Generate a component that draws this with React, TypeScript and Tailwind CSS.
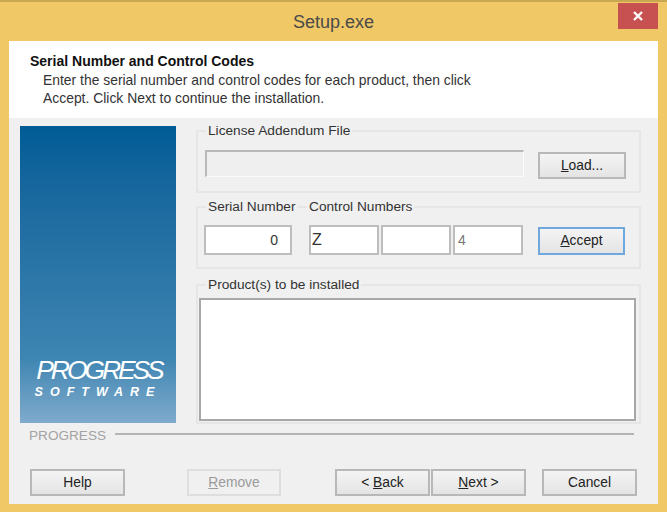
const FONT = "font-['Liberation_Sans',Arial,sans-serif]";

const fieldClass = "h-[30px] border-2 border-[#bdbdbd] bg-white text-[14px] text-[#333]";

const Button = ({ children, className = "" }: { children: React.ReactNode; className?: string }) => (
  <div className={`flex items-center justify-center border-2 bg-gradient-to-b pt-[2px] text-[13.8px] ${className}`}>{children}</div>
);

const normal = "h-[27px] border-[#b8b8b8] from-[#f4f4f4] to-[#e4e4e4] text-[#222]";

const Group = ({ className, children }: { className: string; children: React.ReactNode }) => (
  <div className={`relative w-[445px] border-2 border-[#e6e6e6] ${className}`}>{children}</div>
);

const GroupLabel = ({ className, children }: { className: string; children: React.ReactNode }) => (
  <span className={`absolute top-[-10px] bg-[#f0f0f0] px-[2px] text-[13.7px] leading-[18px] text-[#333] whitespace-nowrap ${className}`}>
    {children}
  </span>
);

const App = () => {
  return (
    <div className={`relative flex h-[512px] w-[667px] flex-col bg-[#f0c866] border-t-2 border-[#c8a850] ${FONT}`}>
      {/* Title bar */}
      <div className="flex h-[39px] shrink-0 items-center justify-center pt-[2px] text-[18px] text-[#4a4a4a]">Setup.exe</div>
      <div className="absolute right-[9px] top-[1px] flex h-[26px] w-[40px] items-center justify-center bg-[#c75050]">
        <svg width="12" height="12" viewBox="0 0 12 12">
          <path d="M2 2 L10 10 M10 2 L2 10" stroke="#fff" strokeWidth="2.4" />
        </svg>
      </div>

      <div className="mx-[9px] flex h-[463px] flex-col bg-[#f0f0f0]">
        {/* Header */}
        <div className="h-[77px] shrink-0 bg-white pl-[21px] pt-[12px]">
          <div className="text-[14px] font-bold leading-[17px] text-[#111]">Serial Number and Control Codes</div>
          <p className="ml-[13px] mt-[1px] w-[460px] text-[13.9px] leading-[18px] text-[#333]">
            Enter the serial number and control codes for each product, then click Accept. Click Next to continue the
            installation.
          </p>
        </div>

        <div className="flex items-start pl-[11px] pt-[8px]">
          {/* Logo panel */}
          <div className="flex h-[297px] w-[156px] shrink-0 flex-col items-center justify-end bg-gradient-to-b from-[#005c96] via-[#3d85b2] via-[78%] to-[#7fabcc] pb-[24px] text-white">
            <div className="pl-[2px] text-[26.5px] italic leading-[26px] tracking-[-3.1px]">PROGRESS</div>
            <div className="mt-[2px] text-[12.5px] font-bold italic leading-[14px] tracking-[7px]">SOFTWARE</div>
          </div>

          <div className="ml-[20px] mt-[4px] flex flex-col">
            <Group className="h-[63px] pl-[7px] pr-[13px] pt-[18px]">
              <GroupLabel className="left-[8px]">License Addendum File</GroupLabel>
              <div className="flex items-start">
                <div className="h-[27px] w-[319px] border-t-2 border-l-2 border-[#b9b9b9] border-r border-b border-r-[#fafafa] border-b-[#fafafa] bg-[#efefef]" />
                <Button className={`ml-[14px] mt-[2px] w-[88px] ${normal}`}>
                  <span><u>L</u>oad...</span>
                </Button>
              </div>
            </Group>

            <Group className="mt-[13px] h-[63px] pl-[6px] pr-[13px] pt-[17px]">
              <GroupLabel className="left-[8px]">Serial Number</GroupLabel>
              <GroupLabel className="left-[109px]">Control Numbers</GroupLabel>
              <div className="flex items-center">
                <div className={`${fieldClass} flex w-[88px] items-center justify-end pr-[12px]`}>0</div>
                <div className={`${fieldClass} ml-[17px] flex w-[70px] items-center pl-[1px] text-[16px]`}>Z</div>
                <div className={`${fieldClass} ml-[2px] w-[70px]`} />
                <div className={`${fieldClass} ml-[2px] flex w-[70px] items-center pl-[3px] text-[10px] text-[#777]`}>4</div>
                <Button className="ml-[15px] mt-[1px] h-[28px] w-[87px] border-[#6fa8dc] from-[#f4f4f4] to-[#e4e4e4] text-[#222]">
                  <span><u>A</u>ccept</span>
                </Button>
              </div>
            </Group>

            <Group className="mt-[15px] h-[140px] px-[1px] pt-[12px]">
              <GroupLabel className="left-[8px]">Product(s) to be installed</GroupLabel>
              <div className="h-[123px] w-[437px] border-2 border-[#a8a8a8] bg-white" />
            </Group>
          </div>
        </div>

        {/* Progress row */}
        <div className="mt-[2px] flex h-[20px] items-center pl-[20px] pr-[24px]">
          <span className="text-[13.6px] text-[#a3a3a3]">PROGRESS</span>
          <div className="ml-[9px] mb-[4px] h-[2px] flex-1 bg-[#b4b4b4]" />
        </div>

        {/* Footer buttons */}
        <div className="mt-[23px] flex items-start pl-[21px]">
          <Button className={`w-[95px] ${normal}`}>Help</Button>
          <Button className="ml-[62px] h-[27px] w-[94px] border-[#dedede] from-[#f0f0f0] to-[#f0f0f0] text-[#9a9a9a]">
            <span><u>R</u>emove</span>
          </Button>
          <Button className={`ml-[54px] w-[95px] ${normal}`}>
            <span>&lt; <u>B</u>ack</span>
          </Button>
          <Button className={`ml-[1px] w-[95px] ${normal}`}>
            <span><u>N</u>ext &gt;</span>
          </Button>
          <Button className={`ml-[16px] w-[95px] ${normal}`}>Cancel</Button>
        </div>
      </div>
    </div>
  );
};

export default App;
